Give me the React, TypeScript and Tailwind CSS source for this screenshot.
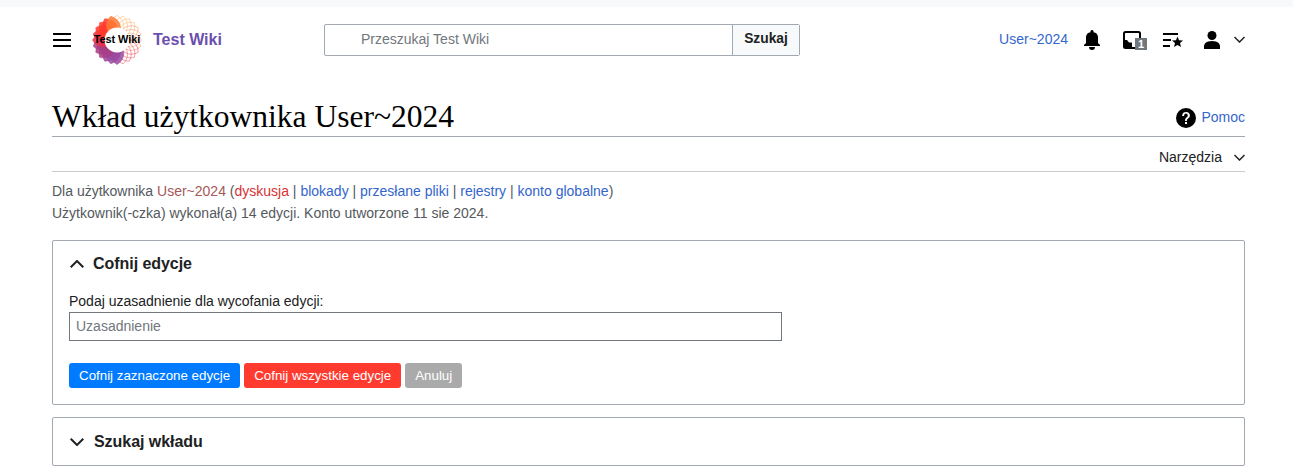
const petals = Array.from({ length: 24 }, (_, i) => i * 15);

// colours walk round the ring: pale orange top right, red on top left, purple bottom left
const petalColor = (deg: number) => {
    if (deg < 50) return '#fdb96c';
    if (deg < 110) return '#fb9a6c';
    if (deg < 170) return '#f2566a';
    if (deg < 215) return '#9a4aa0';
    if (deg < 260) return '#a83e86';
    if (deg < 300) return '#e8304a';
    if (deg < 335) return '#ff3a2c';
    return '#ff7a34';
};

const Logo = () => (
    <div className="relative w-[50px] h-[50px] shrink-0">
        <svg width="50" height="50" viewBox="0 0 50 50">
            {petals.map((deg) => (
                <path
                    key={deg}
                    d="M25 25C16 16 16 6 25 0.5C34 6 34 16 25 25z"
                    transform={`rotate(${deg} 25 25)`}
                    fill={deg >= 170 && deg < 350 ? petalColor(deg) : 'none'}
                    fillOpacity="0.85"
                    stroke={petalColor(deg)}
                    strokeOpacity="0.9"
                    strokeWidth="0.6"
                />
            ))}
            <circle cx="25" cy="25" r="12.5" fill="#fff" />
        </svg>
        <span className="absolute left-0 top-[17px] w-[50px] text-center font-['Liberation_Sans',sans-serif] text-[11px] leading-[14px] font-bold tracking-[-0.1px] text-black whitespace-nowrap">
            Test Wiki
        </span>
    </div>
);

const Icon = ({ d }: { d: string }) => (
    <svg width="20" height="20" viewBox="0 0 20 20" fill="currentColor" className="shrink-0">
        <path d={d} />
    </svg>
);

const ChevronSmall = () => (
    <svg width="11" height="7" viewBox="0 0 11 7" fill="none" stroke="currentColor" strokeWidth="1.5" className="shrink-0">
        <path d="M0.5 1L5.5 6L10.5 1" />
    </svg>
);

const ChevronPanel = ({ up }: { up?: boolean }) => (
    <svg width="14" height="8" viewBox="0 0 14 8" fill="none" stroke="currentColor" strokeWidth="2" className="shrink-0">
        <path d={up ? 'M0.7 7.3L7 1L13.3 7.3' : 'M0.7 0.7L7 7L13.3 0.7'} />
    </svg>
);

const links = ['blokady', 'przesłane pliki', 'rejestry', 'konto globalne'];

export default function App() {
    return (
        <div className="min-h-[476px] bg-white font-['Liberation_Sans',Arial,sans-serif] text-[14px] text-[#202122] overflow-hidden">
            <div className="h-[7px] bg-[#f8f9fa]" />
            <div className="pl-[52px] pr-[48px]">
                <header className="flex items-center h-[65px]">
                    <div className="w-[40px] text-black">
                        <Icon d="M1 3v2h18V3zm0 8h18V9H1zm0 6h18v-2H1z" />
                    </div>
                    <Logo />
                    <span className="ml-[11px] text-[16px] font-bold text-[#6b4fae] w-[171px]">Test Wiki</span>
                    <div className="flex w-[476px] h-[32px] border border-[#a2a9b1] rounded-[2px]">
                        <input
                            placeholder="Przeszukaj Test Wiki"
                            className="flex-1 min-w-0 pl-[36px] pb-[1px] text-[14px] outline-none placeholder:text-[#72777d]"
                        />
                        <div className="w-[67px] flex items-center justify-center bg-[#f8f9fa] border-l border-[#a2a9b1] font-bold text-[13.8px] text-[#202122]">
                            Szukaj
                        </div>
                    </div>
                    <div className="ml-auto flex items-center">
                        <span className="text-[#3366cc] mr-[14px]">User~2024</span>
                        <div className="w-[20px] mr-[21px] text-black">
                            <Icon d="M16 7a5.38 5.38 0 0 0-4.46-4.85C11.6 1.46 11.53 0 10 0S8.4 1.46 8.46 2.15A5.38 5.38 0 0 0 4 7v6l-2 2v1h16v-1l-2-2zm-6 13a3 3 0 0 0 3-3H7a3 3 0 0 0 3 3z" />
                        </div>
                        <div className="relative w-[24px] h-[20px] mr-[16px] text-black">
                            <svg width="18" height="18" viewBox="0 0 18 18" fill="none" className="mt-[1px]">
                                <rect x="1" y="1" width="16" height="16" rx="1.5" stroke="currentColor" strokeWidth="2" />
                                <path d="M1 9h3l2 2.5h3V17H1z" fill="currentColor" />
                            </svg>
                            <span className="absolute left-[12px] top-[8px] w-[12px] h-[12px] bg-[#72777d] text-white text-[11px] leading-[12px] font-bold text-center">
                                1
                            </span>
                        </div>
                        <div className="w-[20px] mr-[19px] text-black">
                            <svg width="20" height="20" viewBox="0 0 20 20" fill="currentColor" className="shrink-0">
                                <path d="M0 3h15v2H0zM0 9h8v2H0zM0 15h7v2H0z" />
                                <path d="M14.5 6.5l1.5 3.7 4 .3-3 2.6 1 3.9-3.5-2.1-3.5 2.1 1-3.9-3-2.6 4-.3z" />
                            </svg>
                        </div>
                        <div className="w-[20px] text-black">
                            <svg width="20" height="20" viewBox="0 0 20 20" fill="currentColor" className="shrink-0">
                                <path d="M10 11c-5.92 0-8 3-8 5v3h16v-3c0-2-2.08-5-8-5z" />
                                <circle cx="10" cy="5.5" r="4.5" />
                            </svg>
                        </div>
                        <div className="ml-[12px]">
                            <ChevronSmall />
                        </div>
                    </div>
                </header>

                <div className="flex items-end justify-between h-[65px] border-b border-[#a2a9b1]">
                    <h1 className="font-['Liberation_Serif',Georgia,serif] text-[31.5px] leading-[38px] text-black">
                        Wkład użytkownika User~2024
                    </h1>
                    <div className="flex items-center gap-[5px] mb-[8px]">
                        <div className="text-black">
                            <Icon d="M10 0a10 10 0 1 0 10 10A10 10 0 0 0 10 0m1 16H9v-2h2zm2.71-7.6a2.64 2.64 0 0 1-.33.74 3.16 3.16 0 0 1-.48.55l-.54.48c-.21.18-.41.35-.58.52a2.54 2.54 0 0 0-.47.56A2.3 2.3 0 0 0 11 12a3.79 3.79 0 0 0-.11 1H9.08a8.9 8.9 0 0 1 .07-1.25 3.28 3.28 0 0 1 .25-.9 2.79 2.79 0 0 1 .41-.67 4 4 0 0 1 .58-.58c.17-.16.34-.3.51-.44a3 3 0 0 0 .43-.44 1.83 1.83 0 0 0 .3-.55 2 2 0 0 0 .11-.72 2.06 2.06 0 0 0-.17-.86 1.71 1.71 0 0 0-1-.9 1.7 1.7 0 0 0-.5-.1 1.77 1.77 0 0 0-1.53.68 3 3 0 0 0-.5 1.82H6.16a4.74 4.74 0 0 1 .28-1.68 3.56 3.56 0 0 1 .8-1.29 3.88 3.88 0 0 1 1.28-.83A4.59 4.59 0 0 1 10.18 4a4.44 4.44 0 0 1 1.44.23 3.51 3.51 0 0 1 1.15.65 3.08 3.08 0 0 1 .78 1.06 3.54 3.54 0 0 1 .29 1.45 3.39 3.39 0 0 1-.12 1.01z" />
                        </div>
                        <span className="text-[#3366cc]">Pomoc</span>
                    </div>
                </div>

                <div className="flex items-center justify-end h-[35px] border-b border-[#c8ccd1] pt-[6px]">
                    <span className="text-[#202122]">Narzędzia</span>
                    <div className="ml-[12px]">
                        <ChevronSmall />
                    </div>
                </div>

                <div className="mt-[8px] leading-[22px] text-[#54595d]">
                    <div>
                        Dla użytkownika <span className="text-[#a55858]">User~2024</span> (
                        <span className="text-[#d73333]">dyskusja</span>
                        {links.map((link) => (
                            <span key={link}>
                                {' | '}
                                <span className="text-[#3366cc]">{link}</span>
                            </span>
                        ))}
                        )
                    </div>
                    <div>Użytkownik(-czka) wykonał(a) 14 edycji. Konto utworzone 11 sie 2024.</div>
                </div>

                <section className="mt-[16px] h-[165px] border border-[#a2a9b1] rounded-[2px] px-[16px]">
                    <div className="flex items-center h-[44px] pt-[1px] text-[16px] font-bold text-[#202122]">
                        <div className="ml-[1px]">
                            <ChevronPanel up />
                        </div>
                        <span className="ml-[9px] tracking-[-0.05px]">Cofnij edycje</span>
                    </div>
                    <div className="mt-[6px] leading-[20px] text-[#202122]">Podaj uzasadnienie dla wycofania edycji:</div>
                    <input
                        placeholder="Uzasadnienie"
                        className="block mt-[1px] w-[713px] h-[29px] px-[6px] pb-[1px] border border-[#72777d] text-[14px] outline-none placeholder:text-[#72777d]"
                    />
                    <div className="flex gap-[4px] mt-[22px]">
                        <div className="flex items-center h-[25px] px-[10px] rounded-[3px] bg-[#007bff] text-white text-[13.33px] font-medium">
                            Cofnij zaznaczone edycje
                        </div>
                        <div className="flex items-center h-[25px] px-[10px] rounded-[3px] bg-[#ff3b30] text-white text-[13.33px] font-medium">
                            Cofnij wszystkie edycje
                        </div>
                        <div className="flex items-center h-[25px] px-[10px] rounded-[3px] bg-[#aaaaaa] text-white text-[13.33px] font-medium">
                            Anuluj
                        </div>
                    </div>
                </section>

                <section className="mt-[12px] h-[49px] border border-[#a2a9b1] rounded-[2px] px-[16px] flex items-center text-[16px] font-bold text-[#202122]">
                    <div className="ml-[1px]">
                        <ChevronPanel />
                    </div>
                    <span className="ml-[10px] tracking-[-0.05px]">Szukaj wkładu</span>
                </section>
            </div>
        </div>
    );
}
